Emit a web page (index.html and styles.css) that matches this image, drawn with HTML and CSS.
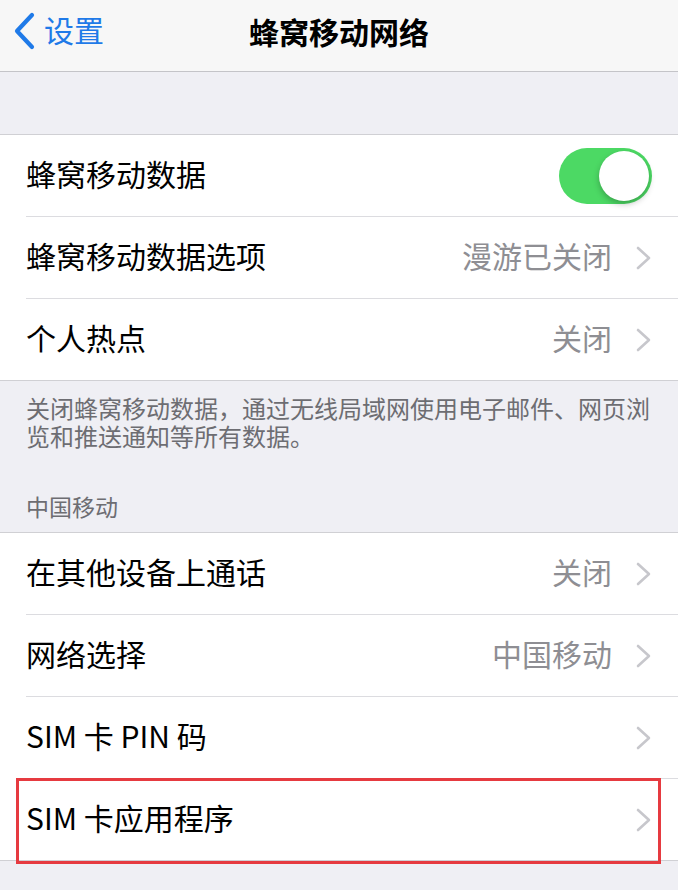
FILE: index.html
```html
<html>
<head>
<meta charset="utf-8">
<title>蜂窝移动网络</title>
<link rel="stylesheet" href="styles.css">
</head>
<body>

<div class="nav">
  <a class="back">
    <svg width="24" height="38" viewBox="0 0 24 38"><path d="M20 3 L5 19 L20 35" fill="none" stroke="#1f7ae8" stroke-width="4.2" stroke-linecap="round" stroke-linejoin="round"/></svg>
    <span>设置</span>
  </a>
  <div class="title">蜂窝移动网络</div>
</div>

<div class="group first">
  <div class="row">
    <div class="cell">
      <span class="label">蜂窝移动数据</span>
      <span class="switch on"><span class="knob"></span></span>
    </div>
  </div>
  <div class="row">
    <div class="cell">
      <span class="label">蜂窝移动数据选项</span>
      <span class="value">漫游已关闭</span>
      <svg class="chev" viewBox="0 0 15 24"><path d="M2 2 L13 12 L2 22"/></svg>
    </div>
  </div>
  <div class="row">
    <div class="cell">
      <span class="label">个人热点</span>
      <span class="value">关闭</span>
      <svg class="chev" viewBox="0 0 15 24"><path d="M2 2 L13 12 L2 22"/></svg>
    </div>
  </div>
</div>

<p class="footer">关闭蜂窝移动数据，通过无线局域网使用电子邮件、网页浏览和推送通知等所有数据。</p>

<p class="header">中国移动</p>

<div class="group">
  <div class="row">
    <div class="cell">
      <span class="label">在其他设备上通话</span>
      <span class="value">关闭</span>
      <svg class="chev" viewBox="0 0 15 24"><path d="M2 2 L13 12 L2 22"/></svg>
    </div>
  </div>
  <div class="row">
    <div class="cell">
      <span class="label">网络选择</span>
      <span class="value">中国移动</span>
      <svg class="chev" viewBox="0 0 15 24"><path d="M2 2 L13 12 L2 22"/></svg>
    </div>
  </div>
  <div class="row">
    <div class="cell">
      <span class="label">SIM 卡 PIN 码</span>
      <svg class="chev" viewBox="0 0 15 24"><path d="M2 2 L13 12 L2 22"/></svg>
    </div>
  </div>
  <div class="row marked">
    <div class="cell">
      <span class="label">SIM 卡应用程序</span>
      <svg class="chev" viewBox="0 0 15 24"><path d="M2 2 L13 12 L2 22"/></svg>
    </div>
    <span class="mark"></span>
  </div>
</div>

</body>
</html>
```

FILE: styles.css
```css
body {
  margin: 0;
  background: #efeff4;
  font-family: "Noto Sans CJK SC", "Noto Sans", sans-serif;
  color: #000;
}

.nav {
  height: 71px;
  background: #f7f7f7;
  border-bottom: 1px solid #c4c4c8;
  display: flex;
  align-items: center;
  justify-content: center;
  position: relative;
}

.back {
  position: absolute;
  left: 12px;
  top: 12px;
  display: flex;
  align-items: center;
  gap: 8px;
  color: #1f7ae8;
  font-size: 30px;
  line-height: 38px;
}

.back span {
  margin-top: -4px;
}

.title {
  font-size: 30px;
  font-weight: bold;
  margin-top: -10px;
}

.group {
  background: #fff;
  border-top: 1px solid #d0d0d4;
  border-bottom: 1px solid #d0d0d4;
}

.group.first {
  margin-top: 62px;
}

.row {
  padding-left: 26px;
  position: relative;
}

.cell {
  height: 81px;
  display: flex;
  align-items: center;
  padding-right: 27px;
  border-bottom: 1px solid #dcdce0;
}

.row:last-child .cell {
  border-bottom: none;
}

.label {
  flex: 1;
  font-size: 30px;
  margin-bottom: 6px;
}

.value {
  font-size: 30px;
  color: #8e8e93;
  margin-right: 24px;
  margin-bottom: 6px;
}

.chev {
  width: 15px;
  height: 24px;
  fill: none;
  stroke: #c7c7cc;
  stroke-width: 2.6;
  stroke-linecap: round;
  stroke-linejoin: round;
}

.switch {
  width: 93px;
  height: 56px;
  border-radius: 28px;
  background: #4cd964;
  position: relative;
  margin-right: -1px;
}

.switch .knob {
  position: absolute;
  right: 3px;
  top: 3px;
  width: 50px;
  height: 50px;
  border-radius: 50%;
  background: #fff;
  box-shadow: 0 3px 6px rgba(0, 0, 0, 0.25);
}

.footer {
  margin: 0;
  padding: 13px 20px 0 26px;
  font-size: 24px;
  line-height: 28px;
  color: #6d6d72;
}

.header {
  margin: 0;
  padding: 41px 26px 11px;
  font-size: 23px;
  line-height: 30px;
  color: #6d6d72;
}

/* red highlight around the last row */
.mark {
  position: absolute;
  left: 16px;
  right: 17px;
  top: -1px;
  bottom: -4px;
  border: 3px solid #e63a40;
}
```
